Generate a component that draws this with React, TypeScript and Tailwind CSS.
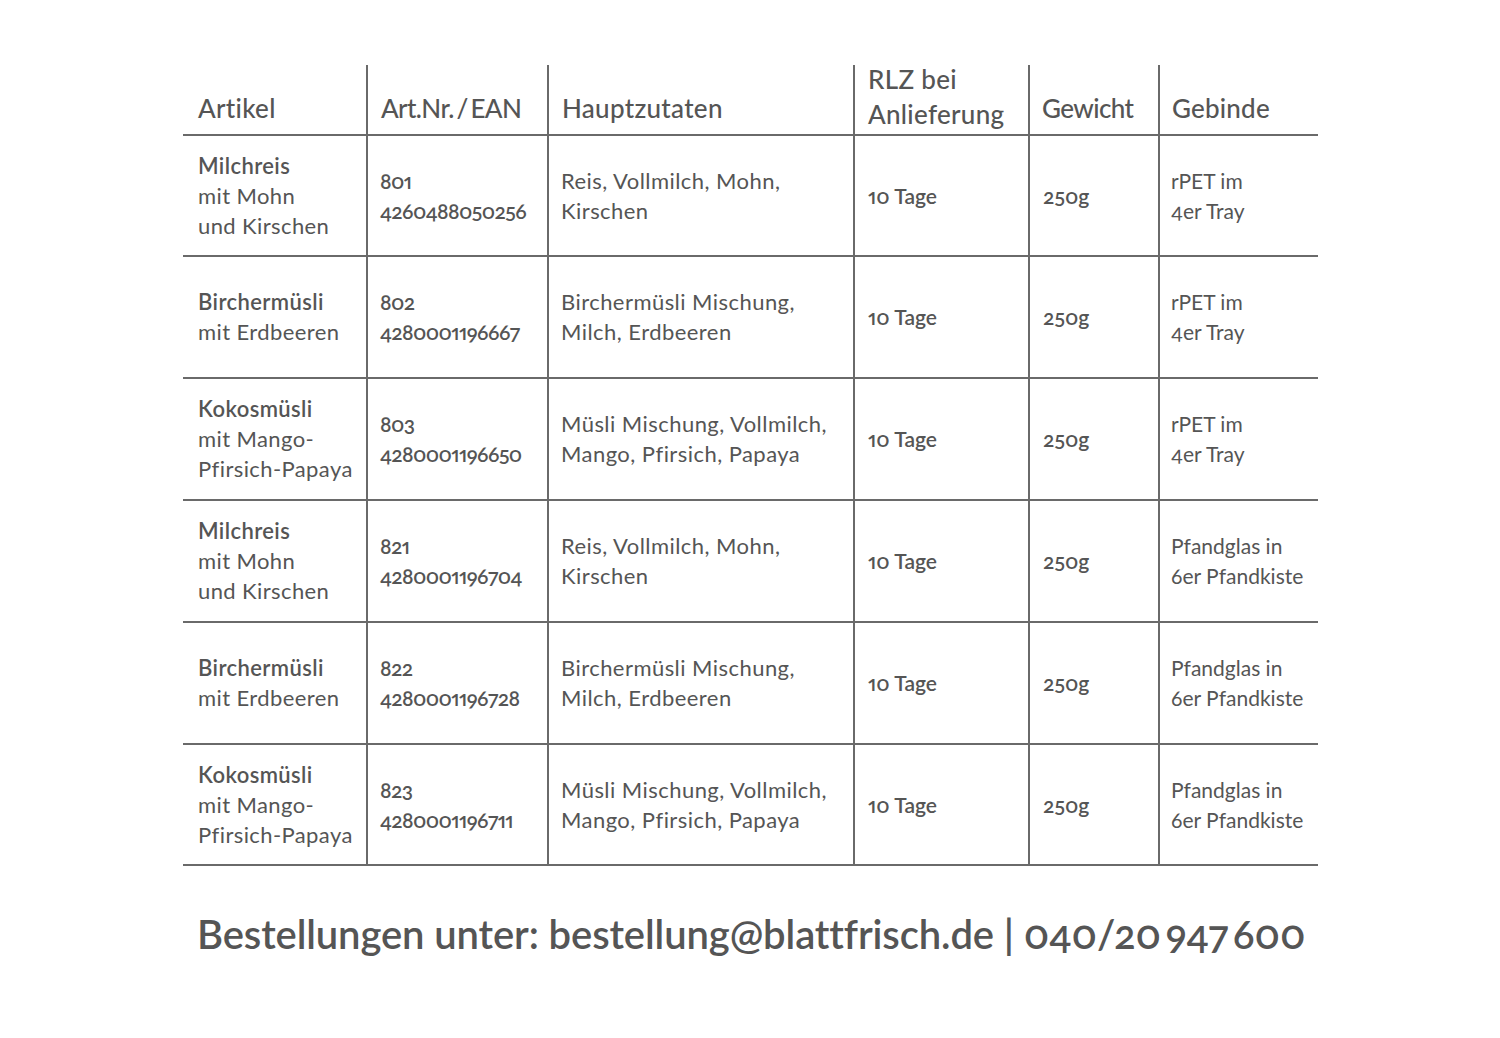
import React from "react";

type Row = {
  name: string;
  sub: string[];
  nr: string;
  ean: string;
  ing: string[];
  pack: string[];
};

const rows: Row[] = [
  { name: "Milchreis", sub: ["mit Mohn", "und Kirschen"], nr: "801", ean: "4260488050256", ing: ["Reis, Vollmilch, Mohn,", "Kirschen"], pack: ["rPET im", "4er Tray"] },
  { name: "Birchermüsli", sub: ["mit Erdbeeren"], nr: "802", ean: "4280001196667", ing: ["Birchermüsli Mischung,", "Milch, Erdbeeren"], pack: ["rPET im", "4er Tray"] },
  { name: "Kokosmüsli", sub: ["mit Mango-", "Pfirsich-Papaya"], nr: "803", ean: "4280001196650", ing: ["Müsli Mischung, Vollmilch,", "Mango, Pfirsich, Papaya"], pack: ["rPET im", "4er Tray"] },
  { name: "Milchreis", sub: ["mit Mohn", "und Kirschen"], nr: "821", ean: "4280001196704", ing: ["Reis, Vollmilch, Mohn,", "Kirschen"], pack: ["Pfandglas in", "6er Pfandkiste"] },
  { name: "Birchermüsli", sub: ["mit Erdbeeren"], nr: "822", ean: "4280001196728", ing: ["Birchermüsli Mischung,", "Milch, Erdbeeren"], pack: ["Pfandglas in", "6er Pfandkiste"] },
  { name: "Kokosmüsli", sub: ["mit Mango-", "Pfirsich-Papaya"], nr: "823", ean: "4280001196711", ing: ["Müsli Mischung, Vollmilch,", "Mango, Pfirsich, Papaya"], pack: ["Pfandglas in", "6er Pfandkiste"] },
];

const vl = "border-l-2 border-[#6a6a6a]";
const head = "border-b-2 border-[#6a6a6a] h-[71px] flex flex-col justify-end text-[26px] font-medium leading-[35px]";

export default function App() {
  return (
    <div
      className="w-[1500px] h-[1038px] bg-white text-[#555555]"
      style={{ fontFamily: "Lato, 'Open Sans', sans-serif", fontFeatureSettings: '"onum" 1, "pnum" 1' }}
    >
      <div className="pt-[65px] pl-[183px]">
        <div className="grid grid-cols-[183px_181px_306px_175px_130px_160px] w-[1135px]">
          <div className={`${head} tracking-[0.3px] pb-[8px] pl-[15px]`}>Artikel</div>
          <div className={`${head} ${vl} tracking-[-0.6px] pb-[8px] pl-[13px]`}>Art.Nr.&#8201;/&#8201;EAN</div>
          <div className={`${head} ${vl} tracking-[0.3px] pb-[8px] pl-[13px]`}>Hauptzutaten</div>
          <div className={`${head} ${vl} tracking-[0.3px] pb-[2px] pl-[13px]`}>
            <span>RLZ bei</span>
            <span>Anlieferung</span>
          </div>
          <div className={`${head} ${vl} tracking-[-0.6px] pb-[8px] pl-[12px]`}>Gewicht</div>
          <div className={`${head} ${vl} tracking-[0.2px] pb-[8px] pl-[12px]`}>Gebinde</div>

          {rows.map((r, i) => {
            const h = i === 0 || i === 5 ? "h-[121px]" : "h-[122px]";
            const cell = `border-b-2 border-[#6a6a6a] flex flex-col justify-center leading-[30px] ${h}`;
            return (
              <React.Fragment key={i}>
                <div className={`${cell} pl-[15px] text-[22px] tracking-[0.4px]`}>
                  <span className="font-semibold">{r.name}</span>
                  {r.sub.map((s, j) => (
                    <span key={j} className="font-normal">{s}</span>
                  ))}
                </div>
                <div className={`${cell} ${vl} pl-[12px] text-[21px] tracking-[-0.6px] font-semibold`}>
                  <span>{r.nr}</span>
                  <span>{r.ean}</span>
                </div>
                <div className={`${cell} ${vl} pl-[12px] text-[22px] tracking-[0.45px] font-normal`}>
                  {r.ing.map((s, j) => (
                    <span key={j}>{s}</span>
                  ))}
                </div>
                <div className={`${cell} ${vl} pl-[13px] text-[21px] font-semibold`}>
                  <span>10 Tage</span>
                </div>
                <div className={`${cell} ${vl} pl-[13px] text-[21px] font-semibold`}>
                  <span>250g</span>
                </div>
                <div className={`${cell} ${vl} pl-[11px] text-[21px] font-normal`}>
                  {r.pack.map((s, j) => (
                    <span key={j}>{s}</span>
                  ))}
                </div>
              </React.Fragment>
            );
          })}
        </div>
        <div className="mt-[42px] pl-[14px] text-[40px] tracking-[-0.12px] font-semibold leading-[52px] whitespace-nowrap">
          Bestellungen unter: bestellung@blattfrisch.de | 040/20&#8201;947&#8201;600
        </div>
      </div>
    </div>
  );
}
